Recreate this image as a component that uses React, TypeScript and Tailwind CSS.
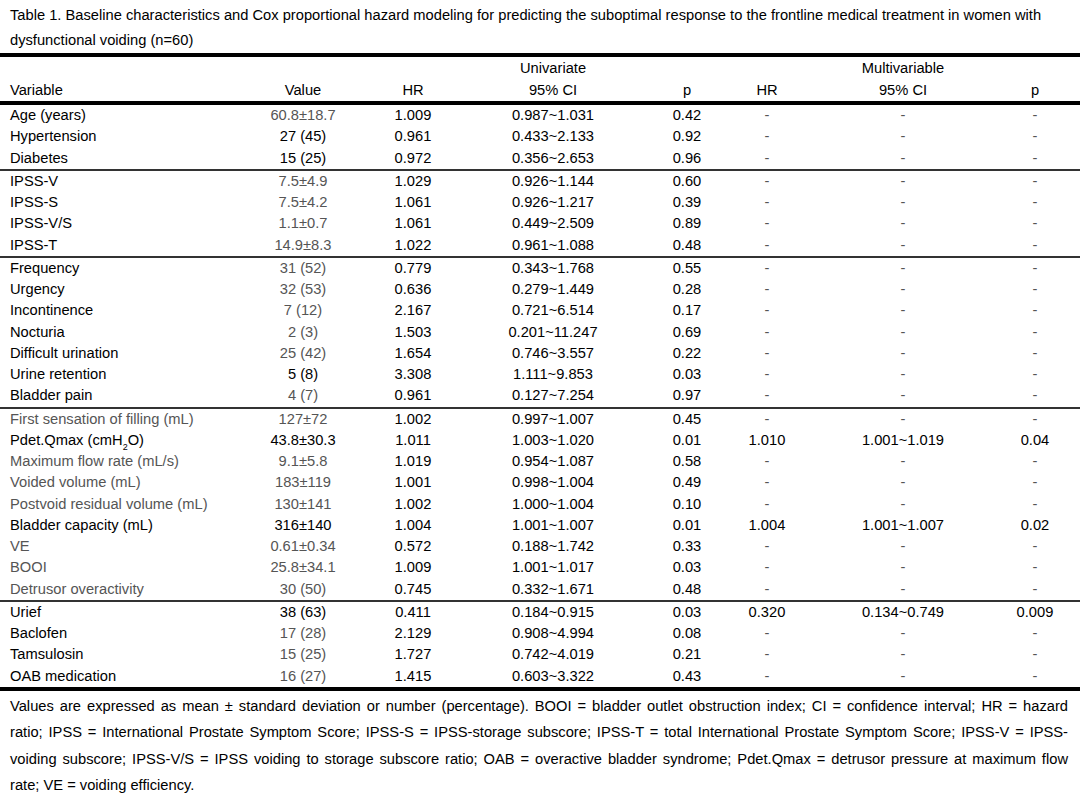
import React from "react";

type Row = {
  name: React.ReactNode;
  value: string;
  hr: string;
  ci: string;
  p: string;
  mhr?: string;
  mci?: string;
  mp?: string;
  greyName?: boolean;
  greyValue?: boolean;
};

const groups: Row[][] = [
  [
    { name: "Age (years)", value: "60.8±18.7", hr: "1.009", ci: "0.987~1.031", p: "0.42", greyValue: true },
    { name: "Hypertension", value: "27 (45)", hr: "0.961", ci: "0.433~2.133", p: "0.92" },
    { name: "Diabetes", value: "15 (25)", hr: "0.972", ci: "0.356~2.653", p: "0.96" },
  ],
  [
    { name: "IPSS-V", value: "7.5±4.9", hr: "1.029", ci: "0.926~1.144", p: "0.60", greyValue: true },
    { name: "IPSS-S", value: "7.5±4.2", hr: "1.061", ci: "0.926~1.217", p: "0.39", greyValue: true },
    { name: "IPSS-V/S", value: "1.1±0.7", hr: "1.061", ci: "0.449~2.509", p: "0.89", greyValue: true },
    { name: "IPSS-T", value: "14.9±8.3", hr: "1.022", ci: "0.961~1.088", p: "0.48", greyValue: true },
  ],
  [
    { name: "Frequency", value: "31 (52)", hr: "0.779", ci: "0.343~1.768", p: "0.55", greyValue: true },
    { name: "Urgency", value: "32 (53)", hr: "0.636", ci: "0.279~1.449", p: "0.28", greyValue: true },
    { name: "Incontinence", value: "7 (12)", hr: "2.167", ci: "0.721~6.514", p: "0.17", greyValue: true },
    { name: "Nocturia", value: "2 (3)", hr: "1.503", ci: "0.201~11.247", p: "0.69", greyValue: true },
    { name: "Difficult urination", value: "25 (42)", hr: "1.654", ci: "0.746~3.557", p: "0.22", greyValue: true },
    { name: "Urine retention", value: "5 (8)", hr: "3.308", ci: "1.111~9.853", p: "0.03" },
    { name: "Bladder pain", value: "4 (7)", hr: "0.961", ci: "0.127~7.254", p: "0.97", greyValue: true },
  ],
  [
    { name: "First sensation of filling (mL)", value: "127±72", hr: "1.002", ci: "0.997~1.007", p: "0.45", greyName: true, greyValue: true },
    {
      name: (
        <>
          Pdet.Qmax (cmH<sub className="text-[9px] align-[-3px]">2</sub>O)
        </>
      ),
      value: "43.8±30.3",
      hr: "1.011",
      ci: "1.003~1.020",
      p: "0.01",
      mhr: "1.010",
      mci: "1.001~1.019",
      mp: "0.04",
    },
    { name: "Maximum flow rate (mL/s)", value: "9.1±5.8", hr: "1.019", ci: "0.954~1.087", p: "0.58", greyName: true, greyValue: true },
    { name: "Voided volume (mL)", value: "183±119", hr: "1.001", ci: "0.998~1.004", p: "0.49", greyName: true, greyValue: true },
    { name: "Postvoid residual volume (mL)", value: "130±141", hr: "1.002", ci: "1.000~1.004", p: "0.10", greyName: true, greyValue: true },
    { name: "Bladder capacity (mL)", value: "316±140", hr: "1.004", ci: "1.001~1.007", p: "0.01", mhr: "1.004", mci: "1.001~1.007", mp: "0.02" },
    { name: "VE", value: "0.61±0.34", hr: "0.572", ci: "0.188~1.742", p: "0.33", greyName: true, greyValue: true },
    { name: "BOOI", value: "25.8±34.1", hr: "1.009", ci: "1.001~1.017", p: "0.03", greyName: true, greyValue: true },
    { name: "Detrusor overactivity", value: "30 (50)", hr: "0.745", ci: "0.332~1.671", p: "0.48", greyName: true, greyValue: true },
  ],
  [
    { name: "Urief", value: "38 (63)", hr: "0.411", ci: "0.184~0.915", p: "0.03", mhr: "0.320", mci: "0.134~0.749", mp: "0.009" },
    { name: "Baclofen", value: "17 (28)", hr: "2.129", ci: "0.908~4.994", p: "0.08", greyValue: true },
    { name: "Tamsulosin", value: "15 (25)", hr: "1.727", ci: "0.742~4.019", p: "0.21", greyValue: true },
    { name: "OAB medication", value: "16 (27)", hr: "1.415", ci: "0.603~3.322", p: "0.43", greyValue: true },
  ],
];

// footnote lines, broken where the source broke them
const notes = [
  "Values are expressed as mean ± standard deviation or number (percentage). BOOI = bladder outlet obstruction index; CI = confidence interval; HR = hazard",
  "ratio; IPSS = International Prostate Symptom Score; IPSS-S = IPSS-storage subscore; IPSS-T = total International Prostate Symptom Score; IPSS-V = IPSS-",
  "voiding subscore; IPSS-V/S = IPSS voiding to storage subscore ratio; OAB = overactive bladder syndrome; Pdet.Qmax = detrusor pressure at maximum flow",
];

const cols = "grid grid-cols-[245px_116px_104px_176px_92px_68px_204px_60px]";

const TableRow = ({ row }: { row: Row }) => (
  <div className={`${cols} h-[21.25px] items-center leading-[21px]`}>
    <span className={`pl-[10px] whitespace-nowrap ${row.greyName ? "text-[#555]" : "text-black"}`}>
      {row.name}
    </span>
    <span className={`text-center ${row.greyValue ? "text-[#555]" : "text-black"}`}>{row.value}</span>
    <span className="text-center">{row.hr}</span>
    <span className="text-center">{row.ci}</span>
    <span className="text-center">{row.p}</span>
    <span className={`text-center ${row.mhr ? "text-black" : "text-[#555]"}`}>{row.mhr ?? "-"}</span>
    <span className={`text-center ${row.mci ? "text-black" : "text-[#555]"}`}>{row.mci ?? "-"}</span>
    <span className={`text-center ${row.mp ? "text-black" : "text-[#555]"}`}>{row.mp ?? "-"}</span>
  </div>
);

export default function App() {
  return (
    <div className="w-[1080px] h-[801px] bg-white text-black text-[14.7px] font-['Liberation_Sans',Arial,sans-serif] overflow-hidden">
      <p className="px-[10px] pt-[3px] leading-[25px]">
        Table 1. Baseline characteristics and Cox proportional hazard modeling for predicting the suboptimal response to
        the frontline medical treatment in women with dysfunctional voiding (n=60)
      </p>

      <div className="h-[4px] bg-black" />
      <div className={`${cols} leading-[22px]`}>
        <span />
        <span />
        <span />
        <span className="text-center">Univariate</span>
        <span />
        <span />
        <span className="text-center">Multivariable</span>
        <span />
        <span className="pl-[10px]">Variable</span>
        <span className="text-center">Value</span>
        <span className="text-center">HR</span>
        <span className="text-center">95% CI</span>
        <span className="text-center">p</span>
        <span className="text-center">HR</span>
        <span className="text-center">95% CI</span>
        <span className="text-center">p</span>
      </div>
      <div className="h-[4px] bg-black" />

      {groups.map((group, gi) => (
        <div key={gi} className={gi > 0 ? "border-t-2 border-[#333]" : ""}>
          {group.map((row, ri) => (
            <TableRow key={ri} row={row} />
          ))}
        </div>
      ))}

      <div className="h-[4px] bg-black" />
      <div className="pl-[10px] pr-[12px] pt-[2px] leading-[26.5px]">
        {notes.map((line, i) => (
          <p key={i} className="whitespace-nowrap text-justify [text-align-last:justify]">
            {line}
          </p>
        ))}
        <p>rate; VE = voiding efficiency.</p>
      </div>
    </div>
  );
}
